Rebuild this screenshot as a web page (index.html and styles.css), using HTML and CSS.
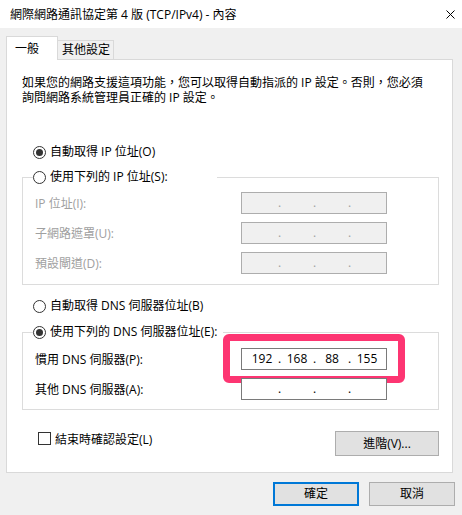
FILE: index.html
```html
<!DOCTYPE html>
<html lang="zh-Hant">
<head>
    <meta charset="UTF-8">
    <title>網際網路通訊協定第 4 版 (TCP/IPv4) - 內容</title>
    <link rel="stylesheet" href="styles.css">
</head>
<body>
    <div class="window">
        <div class="titlebar">
            <span class="title">網際網路通訊協定第 4 版 (TCP/IPv4) - 內容</span>
            <svg class="close" width="9" height="9" viewBox="0 0 9 9">
                <path d="M0.5 0.5 L8.5 8.5 M8.5 0.5 L0.5 8.5" stroke="#000" stroke-width="1" fill="none"/>
            </svg>
        </div>

        <div class="tabs">
            <div class="tab tab-active">一般</div>
            <div class="tab tab-other">其他設定</div>
        </div>

        <div class="panel">
            <p class="intro">如果您的網路支援這項功能，您可以取得自動指派的 IP 設定。否則，您必須<br>詢問網路系統管理員正確的 IP 設定。</p>

            <div class="option option-ip"><span class="radio checked"></span>自動取得 IP 位址(O)</div>
            <fieldset class="group">
                <legend class="group-title group-title-ip"><span class="radio"></span>使用下列的 IP 位址(S):</legend>
                <div class="fields">
                    <span class="label disabled">IP 位址(I):</span>
                    <div class="ip disabled">
                        <span class="octet"></span><span class="dot">.</span>
                        <span class="octet"></span><span class="dot">.</span>
                        <span class="octet"></span><span class="dot">.</span>
                        <span class="octet"></span>
                    </div>
                    <span class="label disabled">子網路遮罩(U):</span>
                    <div class="ip disabled">
                        <span class="octet"></span><span class="dot">.</span>
                        <span class="octet"></span><span class="dot">.</span>
                        <span class="octet"></span><span class="dot">.</span>
                        <span class="octet"></span>
                    </div>
                    <span class="label disabled">預設閘道(D):</span>
                    <div class="ip disabled">
                        <span class="octet"></span><span class="dot">.</span>
                        <span class="octet"></span><span class="dot">.</span>
                        <span class="octet"></span><span class="dot">.</span>
                        <span class="octet"></span>
                    </div>
                </div>
            </fieldset>

            <div class="option option-dns"><span class="radio"></span>自動取得 DNS 伺服器位址(B)</div>
            <fieldset class="group group-dns">
                <legend class="group-title group-title-dns"><span class="radio checked"></span>使用下列的 DNS 伺服器位址(E):</legend>
                <div class="fields">
                    <span class="label">慣用 DNS 伺服器(P):</span>
                    <div class="ip">
                        <span class="octet">192</span><span class="dot">.</span>
                        <span class="octet">168</span><span class="dot">.</span>
                        <span class="octet">88</span><span class="dot">.</span>
                        <span class="octet">155</span>
                        <span class="highlight"></span>
                    </div>
                    <span class="label">其他 DNS 伺服器(A):</span>
                    <div class="ip">
                        <span class="octet"></span><span class="dot">.</span>
                        <span class="octet"></span><span class="dot">.</span>
                        <span class="octet"></span><span class="dot">.</span>
                        <span class="octet"></span>
                    </div>
                </div>
            </fieldset>

            <div class="bottom-row">
                <div class="check"><span class="checkbox"></span>結束時確認設定(L)</div>
                <button class="button advanced">進階(V)...</button>
            </div>
        </div>

        <div class="footer">
            <button class="button default">確定</button>
            <button class="button">取消</button>
        </div>
    </div>
</body>
</html>
```

FILE: styles.css
```css
body {
    margin: 0;
    background: #f0f0f0;
    color: #000;
    font-family: "Open Sans", "Noto Sans CJK TC", sans-serif;
    font-size: 12px;
}

.window {
    width: 462px;
    height: 515px;
}

.titlebar {
    height: 28px;
    background: #fff;
    display: flex;
    align-items: center;
    justify-content: space-between;
    padding: 0 7px 0 10px;
}

.tabs {
    display: flex;
    align-items: flex-end;
    margin-top: 8px;
    padding-left: 6px;
    position: relative;
    z-index: 1;
}

.tab {
    box-sizing: border-box;
    border: 1px solid #d9d9d9;
    border-bottom: none;
    line-height: 16px;
}

.tab-active {
    width: 52px;
    height: 24px;
    background: #fff;
    margin-bottom: -1px;
    padding: 4px 0 0 8px;
}

.tab-other {
    width: 56px;
    height: 19px;
    border-left: none;
    background: #f0f0f0;
    padding: 1px 0 0 4px;
}

.panel {
    box-sizing: border-box;
    width: 447px;
    height: 414px;
    margin-left: 6px;
    background: #fff;
    border: 1px solid #d9d9d9;
    padding: 15px 0 0 15px;
}

.intro {
    margin: 0;
    line-height: 15px;
}

.option {
    display: flex;
    align-items: center;
    height: 16px;
    line-height: 16px;
    margin-left: 11px;
}

.option-ip {
    margin-top: 39px;
}

.option-dns {
    margin-top: 13px;
}

.radio {
    box-sizing: border-box;
    flex: none;
    width: 13px;
    height: 13px;
    margin-right: 4px;
    border: 1px solid #333;
    border-radius: 50%;
    background: #fff;
    display: flex;
    align-items: center;
    justify-content: center;
}

.radio.checked::after {
    content: "";
    width: 7px;
    height: 7px;
    border-radius: 50%;
    background: #333;
}

.group {
    box-sizing: border-box;
    width: 417px;
    min-width: 0;
    margin: 9px 0 0;
    padding: 0 0 10px 10px;
    border: 1px solid #dcdcdc;
}

.group-dns {
    margin-top: 10px;
    padding-bottom: 9px;
}

.group-title {
    display: flex;
    align-items: center;
    height: 16px;
    line-height: 16px;
    padding: 0;
}

.group-title-ip {
    width: 184px;
}

.group-title-dns {
    width: 190px;
}

.fields {
    display: grid;
    grid-template-columns: 206px 146px;
    row-gap: 8px;
    align-items: center;
    padding: 7px 0 0 2px;
}

.group-dns .fields {
    padding-top: 8px;
}

.label.disabled {
    color: #a0a0a0;
}

.ip {
    box-sizing: border-box;
    height: 22px;
    display: flex;
    padding-left: 4px;
    line-height: 20px;
    background: #fff;
    border: 1px solid #7a7a7a;
    position: relative;
}

.ip.disabled {
    background: #f0f0f0;
    border-color: #adadad;
    color: #a0a0a0;
}

.octet {
    width: 32px;
    text-align: center;
}

.dot {
    width: 3px;
    text-align: center;
}

.highlight {
    position: absolute;
    left: -19px;
    right: -19px;
    top: -15px;
    bottom: -14px;
    border: 7px solid #fd3572;
    border-radius: 6px;
    pointer-events: none;
}

.bottom-row {
    box-sizing: border-box;
    width: 417px;
    display: flex;
    justify-content: space-between;
    align-items: flex-start;
    padding-left: 16px;
    margin-top: 21px;
}

.check {
    display: flex;
    align-items: center;
    height: 13px;
    margin-top: 1px;
}

.checkbox {
    box-sizing: border-box;
    width: 13px;
    height: 13px;
    margin-right: 4px;
    border: 1px solid #333;
    background: #fff;
}

.button {
    box-sizing: border-box;
    padding: 0;
    background: #e1e1e1;
    border: 1px solid #adadad;
    color: #000;
    font: inherit;
    line-height: 16px;
}

.advanced {
    width: 104px;
    height: 25px;
}

.footer {
    display: flex;
    justify-content: flex-end;
    gap: 10px;
    padding: 9px 7px 0 0;
}

.footer .button {
    width: 86px;
    height: 24px;
}

.footer .default {
    border: 2px solid #0078d7;
}
```
